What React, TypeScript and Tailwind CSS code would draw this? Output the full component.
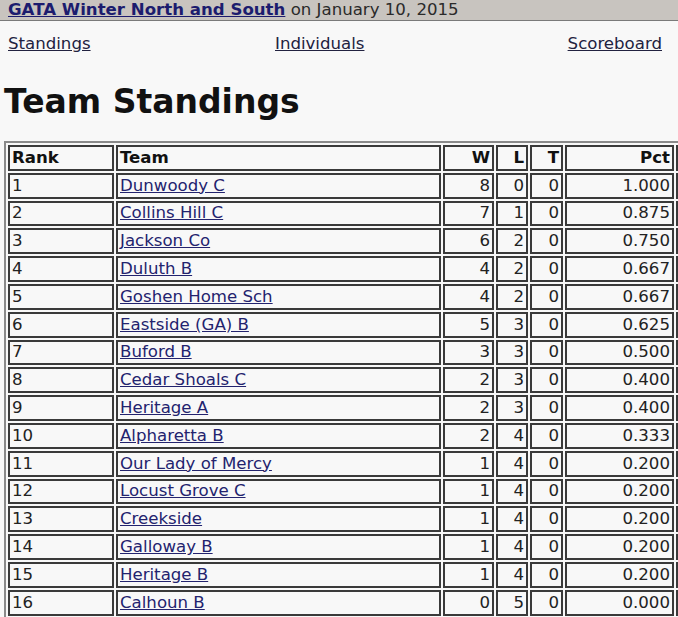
import React from 'react'

interface Row {
  rank: number
  team: string
  w: number
  l: number
  t: number
  pct: string
}

const rows: Row[] = [
  { rank: 1,  team: 'Dunwoody C',         w: 8, l: 0, t: 0, pct: '1.000' },
  { rank: 2,  team: 'Collins Hill C',     w: 7, l: 1, t: 0, pct: '0.875' },
  { rank: 3,  team: 'Jackson Co',         w: 6, l: 2, t: 0, pct: '0.750' },
  { rank: 4,  team: 'Duluth B',           w: 4, l: 2, t: 0, pct: '0.667' },
  { rank: 5,  team: 'Goshen Home Sch',    w: 4, l: 2, t: 0, pct: '0.667' },
  { rank: 6,  team: 'Eastside (GA) B',    w: 5, l: 3, t: 0, pct: '0.625' },
  { rank: 7,  team: 'Buford B',           w: 3, l: 3, t: 0, pct: '0.500' },
  { rank: 8,  team: 'Cedar Shoals C',     w: 2, l: 3, t: 0, pct: '0.400' },
  { rank: 9,  team: 'Heritage A',         w: 2, l: 3, t: 0, pct: '0.400' },
  { rank: 10, team: 'Alpharetta B',       w: 2, l: 4, t: 0, pct: '0.333' },
  { rank: 11, team: 'Our Lady of Mercy',  w: 1, l: 4, t: 0, pct: '0.200' },
  { rank: 12, team: 'Locust Grove C',     w: 1, l: 4, t: 0, pct: '0.200' },
  { rank: 13, team: 'Creekside',          w: 1, l: 4, t: 0, pct: '0.200' },
  { rank: 14, team: 'Galloway B',         w: 1, l: 4, t: 0, pct: '0.200' },
  { rank: 15, team: 'Heritage B',         w: 1, l: 4, t: 0, pct: '0.200' },
  { rank: 16, team: 'Calhoun B',          w: 0, l: 5, t: 0, pct: '0.000' },
]

// classic border=1 table cell look
const cell = 'h-[25.8px] border-2 border-[#3a3a3a] px-[2px] py-0 align-middle'

export default function App() {
  return (
    <div className="w-[678px] h-[617px] overflow-hidden bg-[#f8f8f8] text-[#222] font-['DejaVu_Sans',Verdana,sans-serif]">
      {/* Top bar */}
      <div className="h-[21px] bg-[#c8c4bf] border-b border-[#7a7a7a] px-[8px] text-[16.6px] leading-[19px] whitespace-nowrap">
        <a href="#" className="font-bold text-[#1c1c6e] underline">GATA Winter North and South</a>
        <span className="text-[#2a2a2a]"> on January 10, 2015</span>
      </div>

      {/* Sub nav */}
      <div className="flex items-center pl-[8px] pr-[16px] mt-[13px] text-[16.6px] leading-[20px]">
        <a href="#" className="w-[267px] text-[#222240] underline">Standings</a>
        <a href="#" className="text-[#222240] underline">Individuals</a>
        <a href="#" className="ml-auto text-[#222240] underline">Scoreboard</a>
      </div>

      <h1 className="mt-[28px] ml-[4px] text-[33px] font-bold leading-[40px] text-[#111]">Team Standings</h1>

      <table className="mt-[19px] ml-[4px] w-[776px] table-fixed border-separate border-spacing-[2px] border-2 border-[#8a8a8a] text-[16.6px] leading-[20px]">
        <colgroup>
          <col className="w-[106px]" />
          <col className="w-[325px]" />
          <col className="w-[51px]" />
          <col className="w-[32px]" />
          <col className="w-[33px]" />
          <col className="w-[109px]" />
          <col className="w-[100px]" />
        </colgroup>
        <thead>
          <tr className="font-bold text-[#111]">
            <th className={`${cell} text-left`}>Rank</th>
            <th className={`${cell} text-left`}>Team</th>
            <th className={`${cell} text-right`}>W</th>
            <th className={`${cell} text-right`}>L</th>
            <th className={`${cell} text-right`}>T</th>
            <th className={`${cell} text-right`}>Pct</th>
            <th className={cell}></th>
          </tr>
        </thead>
        <tbody>
          {rows.map(r => (
            <tr key={r.rank}>
              <td className={`${cell} text-left`}>{r.rank}</td>
              <td className={`${cell} text-left`}>
                <a href="#" className="text-[#23236e] underline">{r.team}</a>
              </td>
              <td className={`${cell} text-right`}>{r.w}</td>
              <td className={`${cell} text-right`}>{r.l}</td>
              <td className={`${cell} text-right`}>{r.t}</td>
              <td className={`${cell} text-right`}>{r.pct}</td>
              <td className={cell}></td>
            </tr>
          ))}
        </tbody>
      </table>
    </div>
  )
}
